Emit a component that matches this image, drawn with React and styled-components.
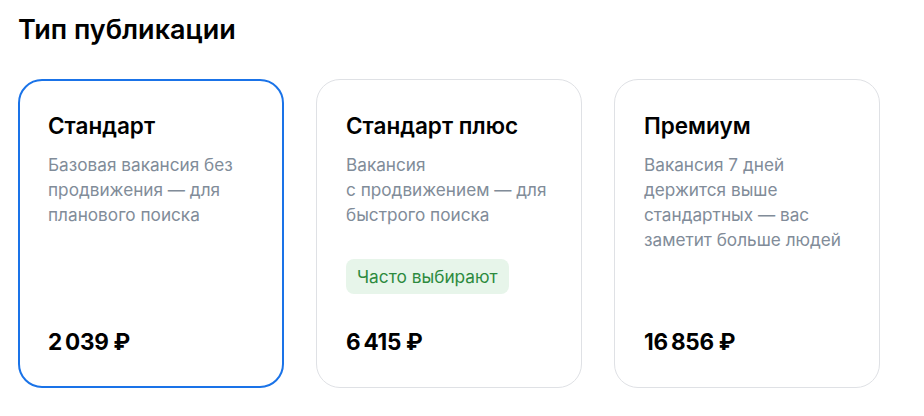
import React from "react";
import styled, { createGlobalStyle } from "styled-components";

const GlobalStyle = createGlobalStyle`
  body {
    margin: 0;
    background: #ffffff;
    font-family: "Inter", "Noto Sans", sans-serif;
    color: #000000;
  }
`;

const Page = styled.div`
  padding: 12px 18px 0 18px;
  width: 924px;
  box-sizing: border-box;
`;

const Heading = styled.h2`
  margin: 0;
  font-size: 27px;
  line-height: 36px;
  font-weight: 600;
  letter-spacing: 0;
`;

const CardRow = styled.div`
  display: flex;
  gap: 32px;
  margin-top: 31px;
`;

const Card = styled.div`
  width: 266px;
  height: 309px;
  box-sizing: border-box;
  border-radius: 24px;
  border: ${(p) => (p.$selected ? "2px solid #1a73e8" : "1px solid #dfe1e5")};
  padding: ${(p) => (p.$selected ? "31px 28px 30px" : "32px 29px 31px")};
  display: flex;
  flex-direction: column;
`;

const Title = styled.div`
  font-size: 22.5px;
  line-height: 28px;
  font-weight: 600;
  letter-spacing: 0;
`;

const Description = styled.div`
  margin-top: 12px;
  font-size: 17.2px;
  line-height: 25px;
  color: #818c99;
`;

const Badge = styled.div`
  align-self: flex-start;
  margin-top: 32px;
  padding: 0 11px;
  height: 35px;
  display: flex;
  align-items: center;
  border-radius: 8px;
  background: #e7f5ea;
  color: #2d8a3e;
  font-size: 17.3px;
`;

const Price = styled.div`
  margin-top: auto;
  font-size: 22.5px;
  line-height: 28px;
  font-weight: 700;
  letter-spacing: -0.3px;
`;

const plans = [
  {
    title: "Стандарт",
    lines: ["Базовая вакансия без", "продвижения — для", "планового поиска"],
    price: "2\u2009039 ₽",
    selected: true,
  },
  {
    title: "Стандарт плюс",
    lines: ["Вакансия", "с продвижением — для", "быстрого поиска"],
    price: "6\u2009415 ₽",
    badge: "Часто выбирают",
  },
  {
    title: "Премиум",
    lines: ["Вакансия 7 дней", "держится выше", "стандартных — вас", "заметит больше людей"],
    price: "16\u2009856 ₽",
  },
];

const App = () => {
  return (
    <>
      <GlobalStyle />
      <Page>
        <Heading>Тип публикации</Heading>
        <CardRow>
          {plans.map((plan) => (
            <Card key={plan.title} $selected={plan.selected}>
              <Title>{plan.title}</Title>
              <Description>
                {plan.lines.map((line) => (
                  <div key={line}>{line}</div>
                ))}
              </Description>
              {plan.badge && <Badge>{plan.badge}</Badge>}
              <Price>{plan.price}</Price>
            </Card>
          ))}
        </CardRow>
      </Page>
    </>
  );
};

export default App;
